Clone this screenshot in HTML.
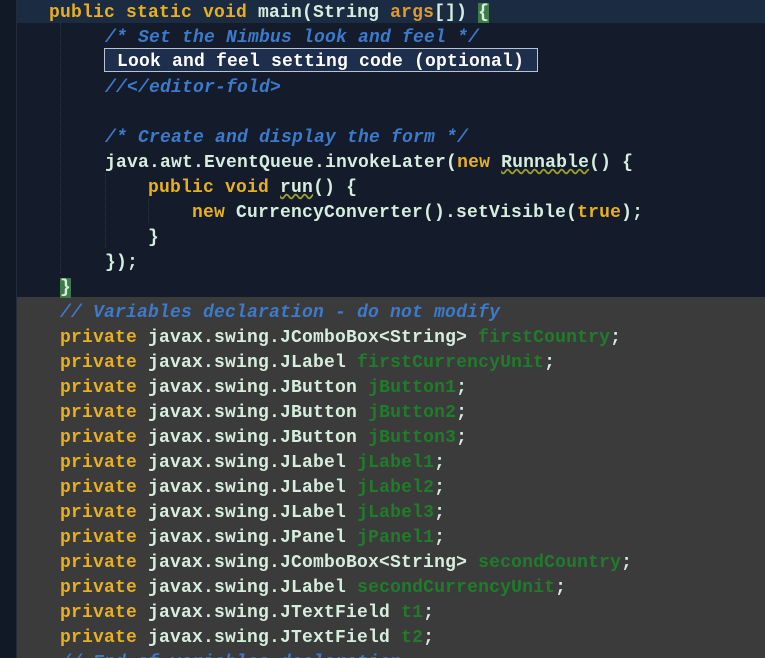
<!DOCTYPE html>
<html style="overflow:hidden;height:658px"><head><meta charset="utf-8"><style>
html,body{margin:0;padding:0}
body{width:765px;height:658px;overflow:hidden;background:#141c2b;position:relative;font-family:"Liberation Mono","Courier New",monospace;font-weight:bold;font-size:18px;letter-spacing:0.2px;color:#d6eedd}
.gut{position:absolute;left:0;top:0;width:16px;height:658px;background:#111826;border-right:1px solid #222c3c}
.band{position:absolute;left:17px;top:0;width:748px;height:23px;background:#1b2b42}
.gray{position:absolute;left:17px;top:297px;width:748px;height:361px;background:#3b3b3b}
.l{position:absolute;white-space:pre;line-height:25px;height:25px}
.k{color:#e8b020}
.c{color:#3c7acb;font-style:italic}
.g{color:#1f7d2a}
.p{color:#e09a30}
.hb{background:#3f7a4a}
.fold{position:absolute;left:104px;top:48px;width:432px;height:22px;border:1px solid #b8c4d0;background:#1d2f4c}
.vl{position:absolute;border-left:1px dotted #2c3648;width:0}
</style></head><body>
<div class="gut"></div>
<div class="band"></div>
<div class="gray"></div>
<div class="fold"></div>
<div class="vl" style="left:60px;top:23px;height:250px"></div>
<div class="vl" style="left:105px;top:173px;height:75px"></div>
<div class="vl" style="left:148px;top:198px;height:25px"></div>
<div class="l" style="left:49px;top:1px"><span class="k">public static void</span> main(String <span class="p">args</span>[]) <span class="hb">{</span></div>
<div class="l c" style="left:105px;top:26px">/* Set the Nimbus look and feel */</div>
<div class="l" style="left:117px;top:50px;color:#fff">Look and feel setting code (optional)</div>
<div class="l c" style="left:105px;top:76px">//&lt;/editor-fold&gt;</div>
<div class="l c" style="left:105px;top:126px">/* Create and display the form */</div>
<div class="l" style="left:105px;top:151px">java.awt.EventQueue.invokeLater(<span class="k">new</span> <span style="text-decoration:underline wavy #a0a030">Runnable</span>() {</div>
<div class="l" style="left:148px;top:176px"><span class="k">public void</span> <span style="text-decoration:underline wavy #a0a030">run</span>() {</div>
<div class="l" style="left:192px;top:201px"><span class="k">new</span> CurrencyConverter().setVisible(<span class="k">true</span>);</div>
<div class="l" style="left:148px;top:226px">}</div>
<div class="l" style="left:105px;top:251px">});</div>
<div class="l" style="left:60px;top:276px"><span class="hb">}</span></div>
<div class="l c" style="left:60px;top:301px">// Variables declaration - do not modify</div>
<div class="l" style="left:60px;top:326px"><span class="k">private</span> javax.swing.JComboBox&lt;String&gt; <span class="g">firstCountry</span>;</div>
<div class="l" style="left:60px;top:351px"><span class="k">private</span> javax.swing.JLabel <span class="g">firstCurrencyUnit</span>;</div>
<div class="l" style="left:60px;top:376px"><span class="k">private</span> javax.swing.JButton <span class="g">jButton1</span>;</div>
<div class="l" style="left:60px;top:401px"><span class="k">private</span> javax.swing.JButton <span class="g">jButton2</span>;</div>
<div class="l" style="left:60px;top:426px"><span class="k">private</span> javax.swing.JButton <span class="g">jButton3</span>;</div>
<div class="l" style="left:60px;top:451px"><span class="k">private</span> javax.swing.JLabel <span class="g">jLabel1</span>;</div>
<div class="l" style="left:60px;top:476px"><span class="k">private</span> javax.swing.JLabel <span class="g">jLabel2</span>;</div>
<div class="l" style="left:60px;top:501px"><span class="k">private</span> javax.swing.JLabel <span class="g">jLabel3</span>;</div>
<div class="l" style="left:60px;top:526px"><span class="k">private</span> javax.swing.JPanel <span class="g">jPanel1</span>;</div>
<div class="l" style="left:60px;top:551px"><span class="k">private</span> javax.swing.JComboBox&lt;String&gt; <span class="g">secondCountry</span>;</div>
<div class="l" style="left:60px;top:576px"><span class="k">private</span> javax.swing.JLabel <span class="g">secondCurrencyUnit</span>;</div>
<div class="l" style="left:60px;top:601px"><span class="k">private</span> javax.swing.JTextField <span class="g">t1</span>;</div>
<div class="l" style="left:60px;top:626px"><span class="k">private</span> javax.swing.JTextField <span class="g">t2</span>;</div>
<div class="l c" style="left:60px;top:651px">// End of variables declaration</div>
</body></html>
